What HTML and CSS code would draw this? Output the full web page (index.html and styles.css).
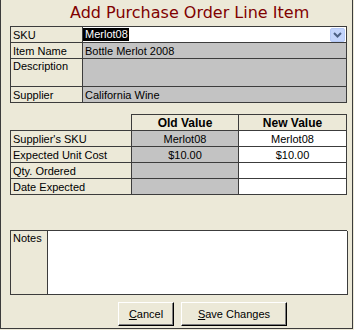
FILE: index.html
```html
<!DOCTYPE html>
<html lang="en">
<head>
  <meta charset="UTF-8">
  <title>Add Purchase Order Line Item</title>
  <link rel="stylesheet" href="styles.css">
</head>
<body>
  <div class="window">
    <h1 class="title">Add Purchase Order Line Item</h1>

    <div class="grid info">
      <div class="cell label">SKU</div>
      <div class="cell combo">
        <span class="selected">Merlot08</span>
        <span class="drop">
          <svg width="9" height="6" viewBox="0 0 9 6"><path d="M1 1 L4.5 4.5 L8 1" fill="none" stroke="#4d6185" stroke-width="2"/></svg>
        </span>
      </div>
      <div class="cell label">Item Name</div>
      <div class="cell ro">Bottle Merlot 2008</div>
      <div class="cell label desc">Description</div>
      <div class="cell ro"></div>
      <div class="cell label">Supplier</div>
      <div class="cell ro">California Wine</div>
    </div>

    <div class="grid values">
      <div class="blank"></div>
      <div class="cell head">Old Value</div>
      <div class="cell head">New Value</div>

      <div class="cell label first">Supplier's SKU</div>
      <div class="cell ro center">Merlot08</div>
      <div class="cell edit center">Merlot08</div>

      <div class="cell label first">Expected Unit Cost</div>
      <div class="cell ro center">$10.00</div>
      <div class="cell edit center">$10.00</div>

      <div class="cell label first">Qty. Ordered</div>
      <div class="cell ro"></div>
      <div class="cell edit"></div>

      <div class="cell label first">Date Expected</div>
      <div class="cell ro"></div>
      <div class="cell edit"></div>
    </div>

    <div class="grid notes">
      <div class="cell label top">Notes</div>
      <div class="cell edit"></div>
    </div>

    <div class="actions">
      <button class="btn cancel"><u>C</u>ancel</button>
      <button class="btn save"><u>S</u>ave Changes</button>
    </div>
  </div>
</body>
</html>
```

FILE: styles.css
```css
* {
  box-sizing: border-box;
}
html, body {
  margin: 0;
  padding: 0;
  background: #ECE9D8;
}
body {
  font-family: "Liberation Sans", Arial, sans-serif;
  font-size: 11px;
  color: #000;
}
.window {
  width: 353px;
  height: 329px;
  border: 1px solid #3C3C3C;
  border-top: none;
  padding: 0 5px 0 9px;
  display: flex;
  flex-direction: column;
}
.title {
  margin: 4px 0 4px 60px;
  height: 18px;
  line-height: 18px;
  font-family: "DejaVu Sans", sans-serif;
  font-size: 16px;
  font-weight: normal;
  color: #800000;
  white-space: nowrap;
}
.grid {
  display: grid;
  width: 337px;
}
.cell {
  border-right: 1px solid #3C3C3C;
  border-bottom: 1px solid #3C3C3C;
  padding: 0 2px;
  display: flex;
  align-items: center;
  white-space: nowrap;
  overflow: hidden;
}
.label { background: #ECE9D8; }
.ro { background: #C3C3C3; }
.edit { background: #FFFFFF; }
.center { justify-content: center; }
.top { align-items: flex-start; }

/* top block */
.info {
  grid-template-columns: 72px 264px;
  grid-template-rows: 16px 16px 28px 16px;
  border-top: 1px solid #3C3C3C;
  border-left: 1px solid #3C3C3C;
}
.desc { align-items: flex-start; padding-top: 1px; }
.combo {
  background: #fff;
  padding: 0 1px 0 0;
}
.selected {
  background: #000;
  color: #fff;
  padding: 0 1px 0 2px;
  line-height: 13px;
}
.drop {
  margin-left: auto;
  width: 15px;
  height: 14px;
  background: #C4D5FC;
  border: 1px solid #B6CAF7;
  border-radius: 2px;
  display: flex;
  align-items: center;
  justify-content: center;
}

/* old / new values */
.values {
  margin-top: 11px;
  grid-template-columns: 122px 107px 108px;
  grid-template-rows: 17px 16px 16px 16px 16px;
}
.blank {
  border-right: 1px solid #3C3C3C;
  border-bottom: 1px solid #3C3C3C;
}
.head {
  border-top: 1px solid #3C3C3C;
  justify-content: center;
  font-weight: bold;
  font-size: 12px;
}
.first { border-left: 1px solid #3C3C3C; }

/* notes */
.notes {
  margin-top: 35px;
  grid-template-columns: 37px 300px;
  height: 65px;
  border-top: 1px solid #3C3C3C;
  border-left: 1px solid #3C3C3C;
}
.notes .label { padding-top: 1px; }

/* buttons */
.actions {
  margin-top: 7px;
  padding-left: 108px;
  display: flex;
  gap: 7px;
}
.btn {
  height: 24px;
  font-family: "Liberation Sans", Arial, sans-serif;
  font-size: 11px;
  color: #000;
  background: #ECE9D8;
  border-top: 1px solid #fff;
  border-left: 1px solid #fff;
  border-right: 1px solid #000;
  border-bottom: 1px solid #000;
  box-shadow: inset -1px -1px 0 #808080;
  padding: 0;
}
.cancel { width: 56px; }
.save { width: 106px; }
```
